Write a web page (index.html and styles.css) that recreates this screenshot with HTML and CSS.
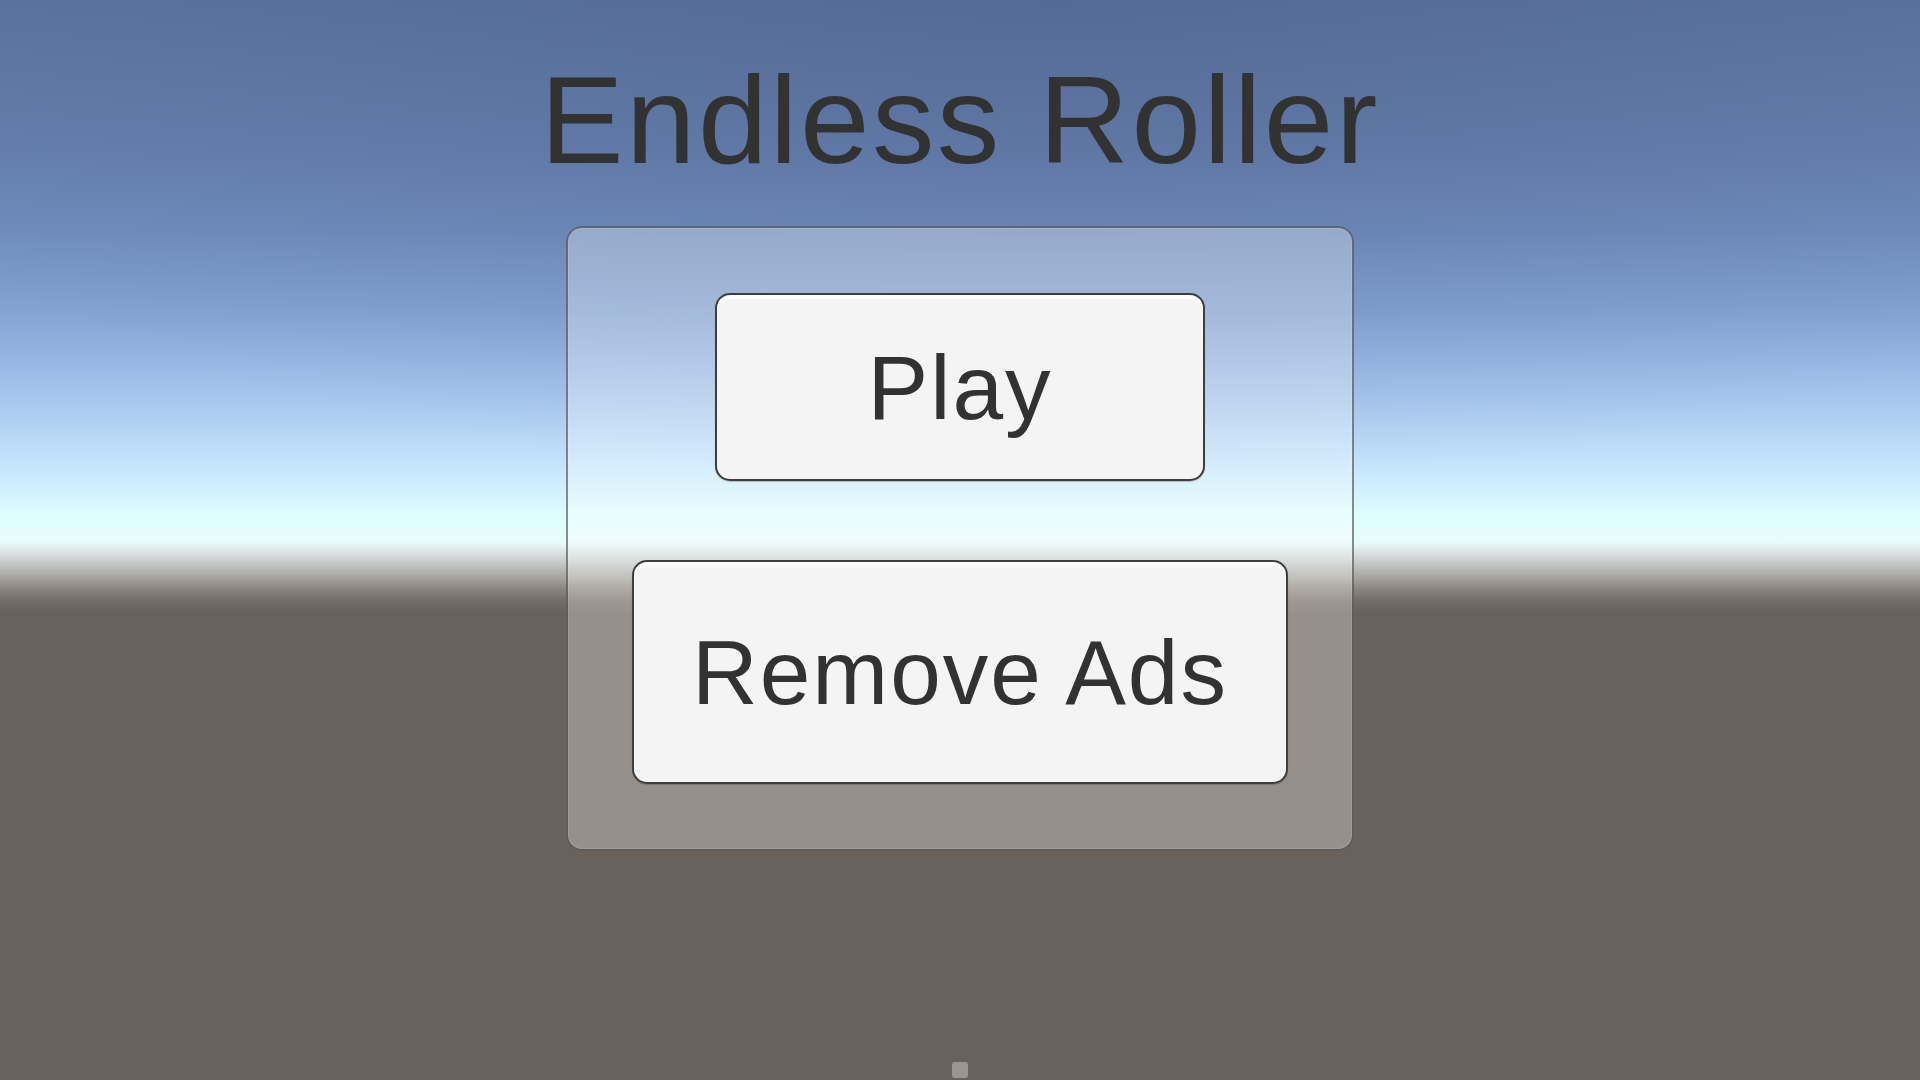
FILE: index.html
```html
<!DOCTYPE html>
<html lang="en">
<head>
<meta charset="utf-8">
<title>Endless Roller</title>
<link rel="stylesheet" href="styles.css">
</head>
<body>
<main class="screen">
  <h1 class="title">Endless Roller</h1>
  <section class="panel">
    <button class="btn btn-play">Play</button>
    <button class="btn btn-ads">Remove Ads</button>
  </section>
  <div class="indicator"></div>
</main>
</body>
</html>
```
FILE: styles.css
```css
html, body {
  margin: 0;
  padding: 0;
}
body {
  width: 1920px;
  height: 1080px;
  overflow: hidden;
  font-family: "Liberation Sans", Arial, sans-serif;
  background:
    radial-gradient(ellipse 70% 45% at 55% 0%, rgba(70, 80, 125, 0.28), rgba(70, 80, 125, 0) 100%),
    linear-gradient(to bottom,
      #5a74a0 0px,
      #6580ad 150px,
      #6f8dbd 230px,
      #82a3d3 310px,
      #a3c3ec 390px,
      #c2e2fb 460px,
      #dcfefe 515px,
      #e9fbfb 542px,
      #d3dbda 556px,
      #b2b3b0 572px,
      #8d8782 588px,
      #736c66 601px,
      #69615b 612px,
      #69615b 1080px);
}
.screen {
  height: 1080px;
  display: flex;
  flex-direction: column;
  align-items: center;
}
.title {
  margin: 57px 0 0 0;
  font-size: 125px;
  line-height: 1;
  font-weight: normal;
  color: #323232;
  letter-spacing: 2.4px;
  height: 125px;
}
.panel {
  box-sizing: border-box;
  margin-top: 44px;
  width: 788px;
  height: 625px;
  padding: 65px 0;
  display: flex;
  flex-direction: column;
  align-items: center;
  gap: 79px;
  border-radius: 16px;
  background: rgba(255, 255, 255, 0.3);
  border: 2px solid rgba(50, 50, 50, 0.55);
  box-shadow: inset 0 0 0 1px rgba(255, 255, 255, 0.12);
}
.btn {
  box-sizing: border-box;
  display: flex;
  align-items: center;
  justify-content: center;
  margin: 0;
  padding: 0;
  font-family: "Liberation Sans", Arial, sans-serif;
  font-size: 91px;
  line-height: 1;
  letter-spacing: 2px;
  color: #323232;
  background: #f4f4f4;
  border: 2px solid #3e3e3e;
  border-radius: 15px;
  box-shadow: inset 0 4px 0 #ffffff, 0 1px 1px rgba(0, 0, 0, 0.2);
  cursor: pointer;
}
.btn-play {
  width: 490px;
  height: 190px;
}
.btn-ads {
  width: 656px;
  height: 226px;
}
.indicator {
  margin-top: auto;
  margin-bottom: 2px;
  width: 16px;
  height: 16px;
  border-radius: 3px;
  background: #9a9590;
}
```
